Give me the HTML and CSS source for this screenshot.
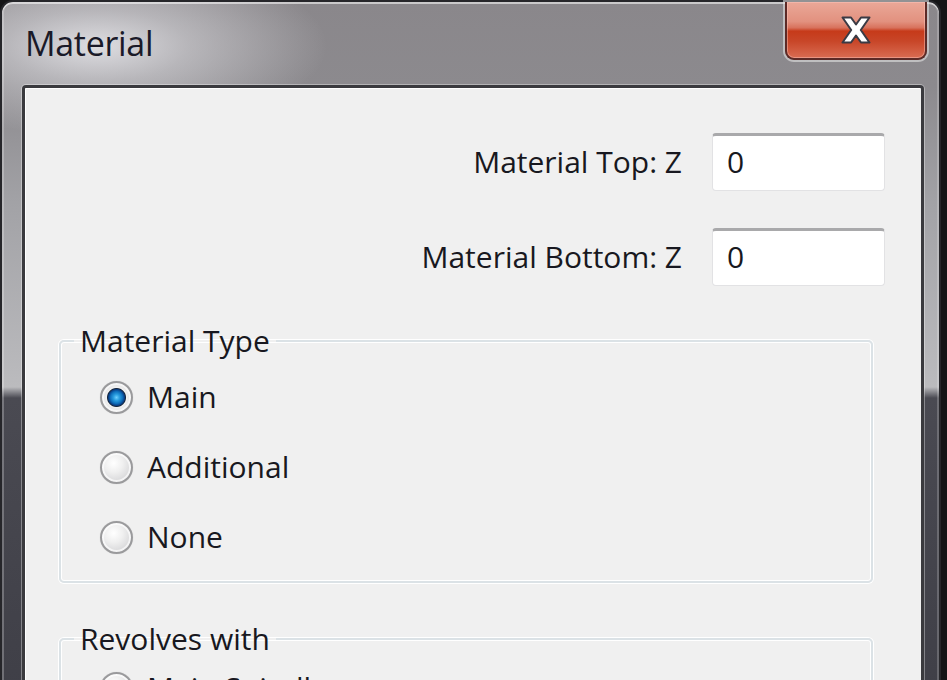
FILE: index.html
```html
<!DOCTYPE html>
<html lang="en">
<head>
<meta charset="utf-8">
<title>Material</title>
<link rel="stylesheet" href="styles.css">
</head>
<body>
<div class="window">
  <div class="titlebar">
    <div class="title">Material</div>
    <button class="close" aria-label="Close">
      <svg width="36" height="32" viewBox="0 0 36 32">
        <path d="M4.5 3.5 H13 L18 10.5 L23 3.5 H31.5 L22.8 16 L31.5 28.5 H23 L18 21.5 L13 28.5 H4.5 L13.2 16 Z" fill="#ffffff" stroke="#3a3a44" stroke-width="2" stroke-linejoin="round"/>
      </svg>
    </button>
  </div>
  <div class="client">
    <div class="fields">
      <div class="field">
        <label class="field-label" for="top">Material Top: Z</label>
        <div class="input" id="top">0</div>
      </div>
      <div class="field">
        <label class="field-label" for="bottom">Material Bottom: Z</label>
        <div class="input" id="bottom">0</div>
      </div>
    </div>
    <fieldset class="group">
      <legend class="legend">Material Type</legend>
      <div class="radios">
        <div class="radio-row"><span class="radio checked"></span><span class="radio-label">Main</span></div>
        <div class="radio-row"><span class="radio"></span><span class="radio-label">Additional</span></div>
        <div class="radio-row"><span class="radio"></span><span class="radio-label">None</span></div>
      </div>
    </fieldset>
    <fieldset class="group group-second">
      <legend class="legend">Revolves with</legend>
      <div class="radios radios-tight">
        <div class="radio-row"><span class="radio"></span><span class="radio-label">Main Spindle</span></div>
        <div class="radio-row"><span class="radio"></span><span class="radio-label">Sub Spindle</span></div>
      </div>
    </fieldset>
  </div>
</div>
</body>
</html>
```

FILE: styles.css
```css
* { box-sizing: border-box; }

html, body {
  margin: 0;
  padding: 0;
}

body {
  width: 947px;
  height: 680px;
  overflow: hidden;
  background: #141416;
  font-family: "Open Sans", "Noto Sans", sans-serif;
  color: #181820;
}

.window {
  width: 941px;
  height: 780px;
  border: 2px solid #26262a;
  border-bottom: none;
  border-radius: 13px 13px 0 0;
  padding: 0 15px 0 20px;
  display: flex;
  flex-direction: column;
  background:
    radial-gradient(ellipse 230px 90px at 95px 44px, rgba(236,236,240,0.85) 0, rgba(236,236,240,0.45) 40%, rgba(236,236,240,0) 100%),
    linear-gradient(to bottom, #8a878b 0, #8c8a8e 85px, #a2a2a6 200px, #bbbbbe 385px, #4a4a52 396px, #3c3c44 100%);
  box-shadow: inset 0 2px 0 rgba(255,255,255,0.55), inset 2px 0 0 rgba(255,255,255,0.25), inset -2px 0 0 rgba(255,255,255,0.2);
}

.titlebar {
  height: 83px;
  display: flex;
  align-items: flex-start;
  justify-content: space-between;
  flex-shrink: 0;
}

.title {
  margin-left: 3px;
  padding-top: 19px;
  font-size: 34px;
  line-height: 44px;
  color: #1a1a28;
  letter-spacing: -0.3px;
}

.close {
  width: 142px;
  height: 58px;
  margin-right: -3px;
  padding: 0;
  display: flex;
  align-items: center;
  justify-content: center;
  border: 2px solid #5c2a26;
  border-top: none;
  border-radius: 0 0 9px 9px;
  background: linear-gradient(to bottom, #eaa898 0, #e2917f 35%, #d8725c 46%, #c63a1a 52%, #c84628 70%, #d96c52 100%);
  box-shadow: 0 0 0 2px rgba(235,235,235,0.55), inset 0 0 0 1px rgba(255,200,190,0.45);
}

.close svg {
  display: block;
  margin-top: -1px;
}

.client {
  flex: 1;
  background: #f0f0f0;
  border: 3px solid #3a3a3e;
  border-bottom: none;
  border-radius: 4px 4px 0 0;
  box-shadow: 0 0 0 1px rgba(255,255,255,0.35), inset 1px 1px 0 #ffffff;
  padding: 45px 36px 0 34px;
  display: flex;
  flex-direction: column;
}

.fields {
  display: flex;
  flex-direction: column;
  gap: 37px;
}

.field {
  display: flex;
  align-items: center;
  justify-content: flex-end;
  gap: 30px;
}

.field-label {
  font-size: 30px;
  line-height: 36px;
}

.input {
  width: 173px;
  height: 58px;
  background: #ffffff;
  border: 1px solid #e2e2e4;
  border-top: 3px solid #a9a9ab;
  border-radius: 4px;
  padding: 0 14px;
  font-size: 30px;
  line-height: 52px;
}

.group {
  margin: 37px 12px 0 0;
  padding: 0 0 27px 39px;
  border: 2px solid #dbe2e6;
  border-radius: 5px;
  box-shadow: inset 0 0 0 1px #ffffff, 0 0 0 1px #ffffff;
  min-width: 0;
}

.group-second {
  margin-top: 38px;
}

.legend {
  margin-left: -26px;
  padding: 0 6px;
  font-size: 30px;
  line-height: 36px;
}

.radios {
  display: flex;
  flex-direction: column;
  gap: 36px;
  padding-top: 21px;
}

.radios-tight {
  padding-top: 14px;
}

.radio-row {
  display: flex;
  align-items: center;
  gap: 14px;
  height: 34px;
}

.radio {
  width: 33px;
  height: 33px;
  border-radius: 50%;
  flex-shrink: 0;
  border: 2px solid #9a9a9c;
  background: radial-gradient(circle at 40% 35%, #ffffff 0, #f0f0f0 35%, #d4d4d6 80%, #c6c6c8 100%);
  box-shadow: inset 0 0 0 2px rgba(255,255,255,0.7), 0 0 1px rgba(0,0,0,0.2);
}

.radio.checked {
  background:
    radial-gradient(circle at 50% 50%, #6fd0ff 0, #2a9ee0 3px, #0e70bc 6px, #0a3f86 8px, #18283c 9px, rgba(255,255,255,0) 10px),
    radial-gradient(circle at 50% 50%, #ffffff 0, #f4f4f4 45%, #c8c8ca 100%);
}

.radio-label {
  font-size: 30px;
  line-height: 36px;
}
```
